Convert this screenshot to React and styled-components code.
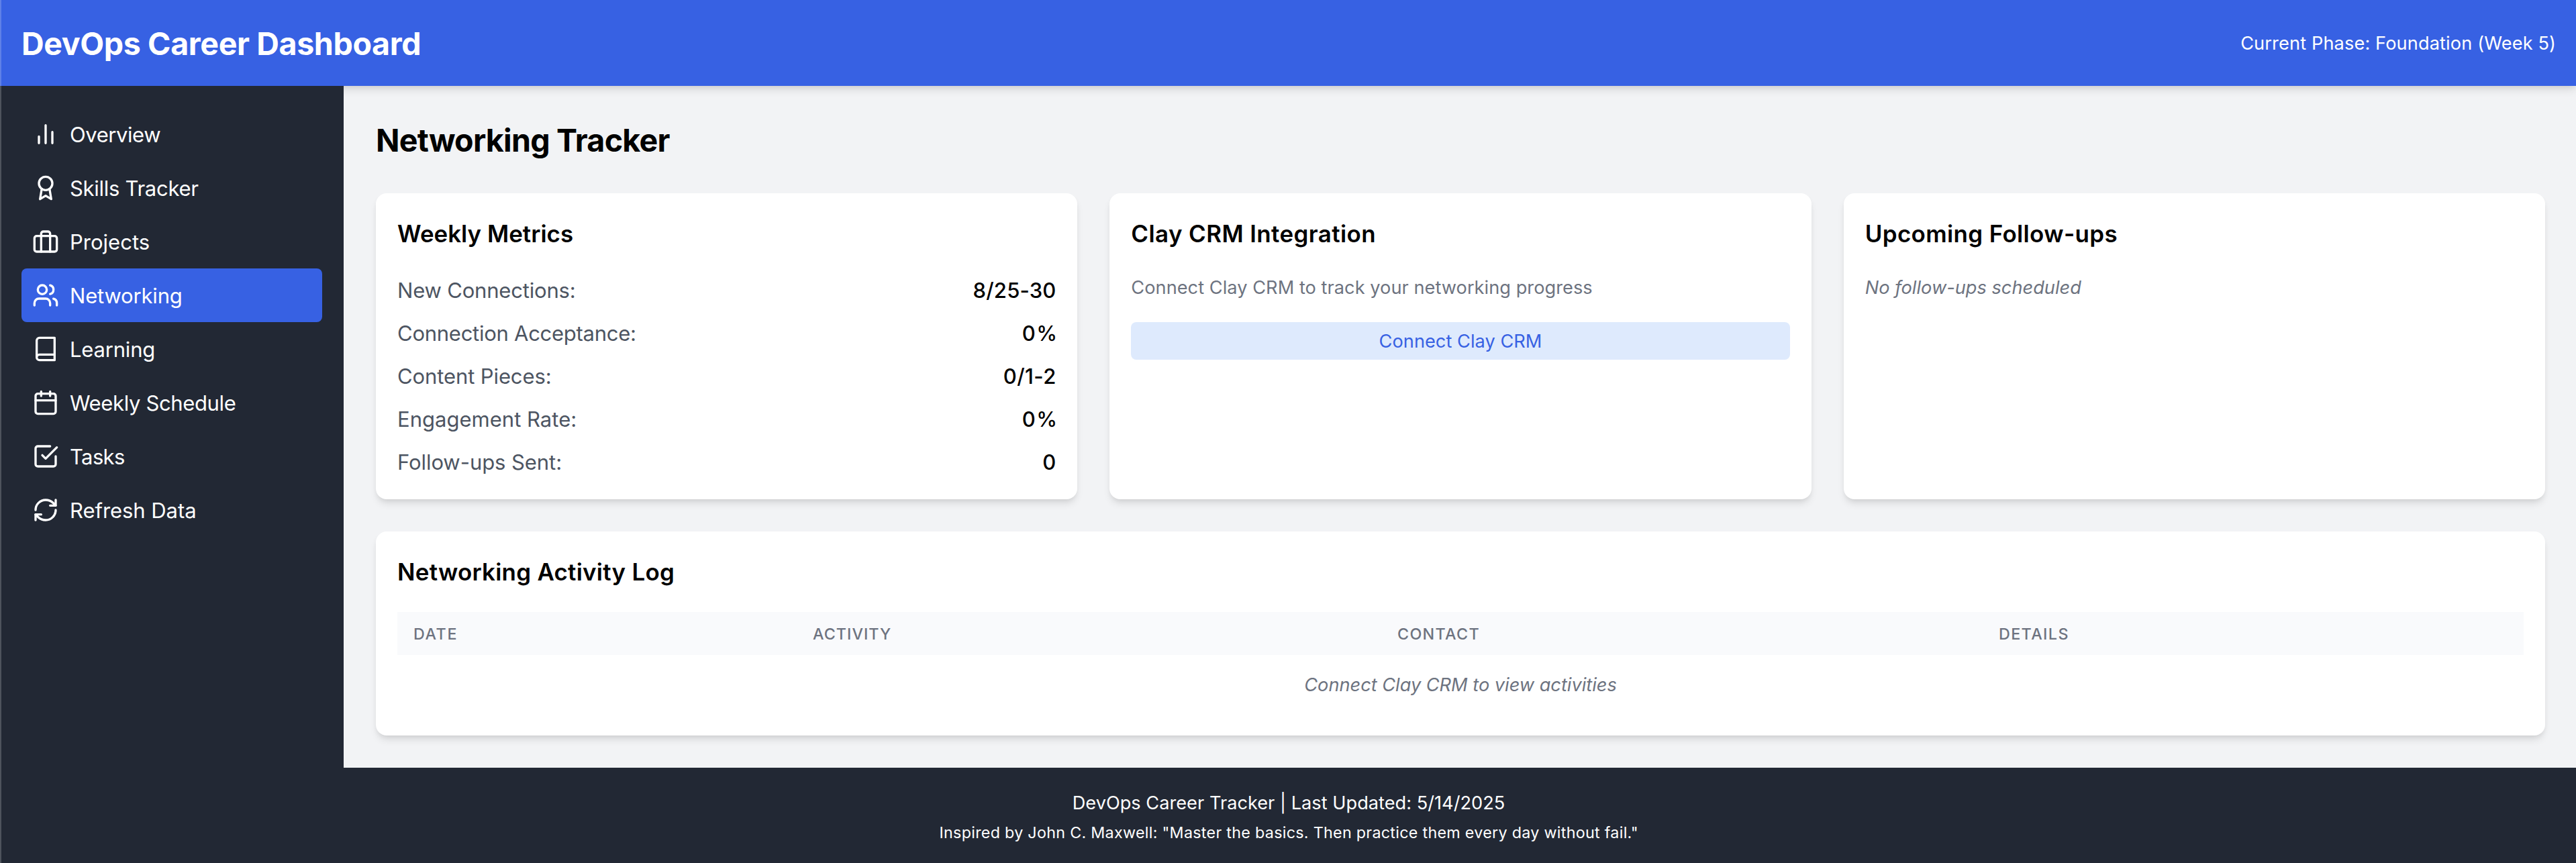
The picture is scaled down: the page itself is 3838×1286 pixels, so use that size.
import React from "react";
import styled, { createGlobalStyle } from "styled-components";

const GlobalStyle = createGlobalStyle`
  *, *::before, *::after { box-sizing: border-box; }
  html, body { margin: 0; padding: 0; overflow: hidden; }
  body {
    background: #f2f3f5;
    color: #000;
    font-family: Inter, "Liberation Sans", sans-serif;
    font-size: 32px;
    line-height: 48px;
  }
  h1, h2, h3, p, ul { margin: 0; padding: 0; }
`;

const Page = styled.div`
  display: flex;
  flex-direction: column;
  width: 3840px;
  height: 1286px;
  overflow: hidden;
`;

/* Thin highlight along the window's left side, over everything else. */
const Edge = styled.div`
  position: absolute;
  top: 0;
  left: 0;
  width: 2px;
  height: 1286px;
  background: rgba(255, 255, 255, 0.2);
`;

/* Inline text with optical size, tracking and a baseline nudge. */
const Text = styled.span`
  font-size: 0.97em;
  line-height: 0;
  letter-spacing: ${(p) => p.$ls || 0}px;
  margin-right: ${(p) => -(p.$ls || 0) - (p.$pull || 0)}px;
  vertical-align: ${(p) => (p.$drop ? "-1px" : "baseline")};
  white-space: nowrap;
`;

const Header = styled.header`
  flex: none;
  display: flex;
  justify-content: space-between;
  align-items: center;
  height: 128px;
  padding: 0 32px;
  background: #3761e3;
  color: #fff;
  box-shadow: 0 8px 12px -2px rgba(0, 0, 0, 0.1), 0 4px 8px -4px rgba(0, 0, 0, 0.1);
`;

const Brand = styled.h1`
  font-size: 48px;
  line-height: 64px;
  font-weight: 700;
`;

const Phase = styled.div`
  font-size: 28px;
  line-height: 40px;
`;

const Body = styled.div`
  flex: none;
  display: flex;
  height: 1016px;
`;

const Sidebar = styled.aside`
  flex: none;
  width: 512px;
  padding: 32px;
  background: #222834;
  color: #fff;
`;

const NavList = styled.ul`
  list-style: none;
`;

const NavItem = styled.li`
  display: flex;
  align-items: center;
  gap: 16px;
  height: 80px;
  padding: 16px;
  border-radius: 8px;
  background: ${(p) => (p.$active ? "#3761e3" : "transparent")};
`;

const NavLabel = styled.div`
  height: 48px;
`;

const Icon = styled.svg`
  flex: none;
  width: 40px;
  height: 40px;
  fill: none;
  stroke: currentColor;
  stroke-width: 2;
  stroke-linecap: round;
  stroke-linejoin: round;
`;

const Main = styled.main`
  flex: 1;
  padding: 48px;
`;

const PageTitle = styled.h2`
  margin-bottom: 48px;
  font-size: 48px;
  line-height: 64px;
  font-weight: 700;
`;

const CardGrid = styled.div`
  display: grid;
  grid-template-columns: repeat(3, 1fr);
  gap: 48px;
  margin-bottom: 48px;
`;

const Card = styled.section`
  padding: 32px;
  border-radius: 16px;
  background: #fff;
  box-shadow: 0 8px 12px -2px rgba(0, 0, 0, 0.1), 0 4px 8px -4px rgba(0, 0, 0, 0.1);
`;

const CardTitle = styled.h3`
  margin-bottom: 32px;
  font-size: 36px;
  line-height: 56px;
  font-weight: 600;
`;

const Metrics = styled.div`
  display: flex;
  flex-direction: column;
  gap: 16px;
`;

const Metric = styled.div`
  display: flex;
  justify-content: space-between;
  height: 48px;
`;

const MetricLabel = styled.div`
  color: #4d5562;
`;

const MetricValue = styled.div`
  font-weight: 500;
`;

const Note = styled.p`
  font-size: 28px;
  line-height: 40px;
  color: #6d7380;
  font-style: ${(p) => (p.$italic ? "italic" : "normal")};
`;

const ConnectButton = styled.button`
  display: block;
  width: 100%;
  height: 56px;
  margin: 32px 0 0;
  padding: 8px 24px;
  border: 0;
  border-radius: 8px;
  background: #deeafd;
  color: #3761e3;
  font: inherit;
  font-size: 28px;
  line-height: 40px;
`;

const Table = styled.table`
  width: 100%;
  table-layout: fixed;
  border-collapse: collapse;
`;

const HeadCell = styled.th`
  width: ${(p) => p.$w};
  padding: 16px 24px;
  background: #f9fafc;
  color: #6d7380;
  font-size: 24px;
  line-height: 32px;
  font-weight: 500;
  text-align: left;
`;

const EmptyCell = styled.td`
  padding: 24px;
  color: #6d7380;
  font-size: 28px;
  line-height: 40px;
  font-style: italic;
  text-align: center;
`;

const Footer = styled.footer`
  flex: none;
  display: flex;
  flex-direction: column;
  align-items: center;
  gap: 8px;
  height: 142px;
  padding-top: 32px;
  background: #222834;
  color: #fff;
`;

const FooterLine = styled.p`
  font-size: ${(p) => (p.$small ? 24 : 28)}px;
  line-height: ${(p) => (p.$small ? 32 : 40)}px;
`;

const navItems = [
  { label: "Overview", ls: -0.45, icon: <path d="M18 20V10M12 20V4M6 20v-6" /> },
  {
    label: "Skills Tracker",
    ls: -0.3,
    icon: (
      <>
        <circle cx="12" cy="8" r="6" />
        <path d="M15.477 12.89 17 22l-5-3-5 3 1.523-9.11" />
      </>
    ),
  },
  {
    label: "Projects",
    ls: 0,
    icon: (
      <>
        <rect x="2" y="7" width="20" height="14" rx="2" />
        <path d="M16 21V5a2 2 0 0 0-2-2h-4a2 2 0 0 0-2 2v16" />
      </>
    ),
  },
  {
    label: "Networking",
    ls: -0.2,
    active: true,
    icon: (
      <>
        <path d="M16 21v-2a4 4 0 0 0-4-4H6a4 4 0 0 0-4 4v2" />
        <circle cx="9" cy="7" r="4" />
        <path d="M22 21v-2a4 4 0 0 0-3-3.87M16 3.13a4 4 0 0 1 0 7.75" />
      </>
    ),
  },
  {
    label: "Learning",
    ls: -0.2,
    icon: <path d="M4 19.5v-15A2.5 2.5 0 0 1 6.5 2H20v20H6.5a2.5 2.5 0 0 1 0-5H20" />,
  },
  {
    label: "Weekly Schedule",
    ls: -0.38,
    icon: (
      <>
        <rect x="3" y="4" width="18" height="18" rx="2" />
        <path d="M16 2v4M8 2v4M3 10h18" />
      </>
    ),
  },
  {
    label: "Tasks",
    ls: -0.65,
    icon: (
      <>
        <path d="m9 11 3 3L22 4" />
        <path d="M21 12v7a2 2 0 0 1-2 2H5a2 2 0 0 1-2-2V5a2 2 0 0 1 2-2h11" />
      </>
    ),
  },
  {
    label: "Refresh Data",
    ls: -0.07,
    icon: (
      <>
        <path d="M3 12a9 9 0 0 1 9-9 9.75 9.75 0 0 1 6.74 2.74L21 8" />
        <path d="M21 3v5h-5M21 12a9 9 0 0 1-9 9 9.75 9.75 0 0 1-6.74-2.74L3 16" />
        <path d="M8 16H3v5" />
      </>
    ),
  },
];

const metrics = [
  { label: "New Connections:", ls: -0.2, value: "8/25-30", vls: 0.15 },
  { label: "Connection Acceptance:", ls: -0.28, value: "0%", vls: 1.6, pull: 1.8 },
  { label: "Content Pieces:", ls: -0.12, value: "0/1-2", vls: 0.42 },
  { label: "Engagement Rate:", ls: 0, value: "0%", vls: 1.6, pull: 1.8 },
  { label: "Follow-ups Sent:", ls: -0.08, value: "0", vls: 0 },
];

const columns = [
  { label: "DATE", ls: 1.6, width: "595px" },
  { label: "ACTIVITY", ls: 1.05, width: "871px" },
  { label: "CONTACT", ls: 1.35, width: "896px" },
  { label: "DETAILS", ls: 1.4, width: "auto" },
];

export default function App() {
  return (
    <Page>
      <GlobalStyle />
      <Header>
        <Brand><Text $drop $ls={-0.37}>DevOps Career Dashboard</Text></Brand>
        <Phase><Text $ls={0.13}>Current Phase: Foundation (Week 5)</Text></Phase>
      </Header>
      <Body>
        <Sidebar>
          <NavList>
            {navItems.map((item) => (
              <NavItem key={item.label} $active={item.active}>
                <Icon viewBox="0 0 24 24">{item.icon}</Icon>
                <NavLabel><Text $drop $ls={item.ls}>{item.label}</Text></NavLabel>
              </NavItem>
            ))}
          </NavList>
        </Sidebar>
        <Main>
          <PageTitle><Text $drop $ls={-0.75}>Networking Tracker</Text></PageTitle>
          <CardGrid>
            <Card>
              <CardTitle><Text $ls={0.03}>Weekly Metrics</Text></CardTitle>
              <Metrics>
                {metrics.map((m) => (
                  <Metric key={m.label}>
                    <MetricLabel><Text $drop $ls={m.ls}>{m.label}</Text></MetricLabel>
                    <MetricValue><Text $drop $ls={m.vls} $pull={m.pull}>{m.value}</Text></MetricValue>
                  </Metric>
                ))}
              </Metrics>
            </Card>
            <Card>
              <CardTitle><Text $ls={0.42}>Clay CRM Integration</Text></CardTitle>
              <Note><Text $ls={0.05}>Connect Clay CRM to track your networking progress</Text></Note>
              <ConnectButton><Text $ls={0.05}>Connect Clay CRM</Text></ConnectButton>
            </Card>
            <Card>
              <CardTitle><Text $ls={0.38}>Upcoming Follow-ups</Text></CardTitle>
              <Note $italic><Text $ls={0.03}>No follow-ups scheduled</Text></Note>
            </Card>
          </CardGrid>
          <Card>
            <CardTitle><Text $ls={0.26}>Networking Activity Log</Text></CardTitle>
            <Table>
              <thead>
                <tr>
                  {columns.map((c) => (
                    <HeadCell key={c.label} $w={c.width}><Text $drop $ls={c.ls}>{c.label}</Text></HeadCell>
                  ))}
                </tr>
              </thead>
              <tbody>
                <tr>
                  <EmptyCell colSpan={4}><Text>Connect Clay CRM to view activities</Text></EmptyCell>
                </tr>
              </tbody>
            </Table>
          </Card>
        </Main>
      </Body>
      <Footer>
        <FooterLine><Text $ls={0.02}>DevOps Career Tracker | Last Updated: 5/14/2025</Text></FooterLine>
        <FooterLine $small><Text $drop $ls={0.3}>Inspired by John C. Maxwell: "Master the basics. Then practice them every day without fail."</Text></FooterLine>
      </Footer>
      <Edge />
    </Page>
  );
}
